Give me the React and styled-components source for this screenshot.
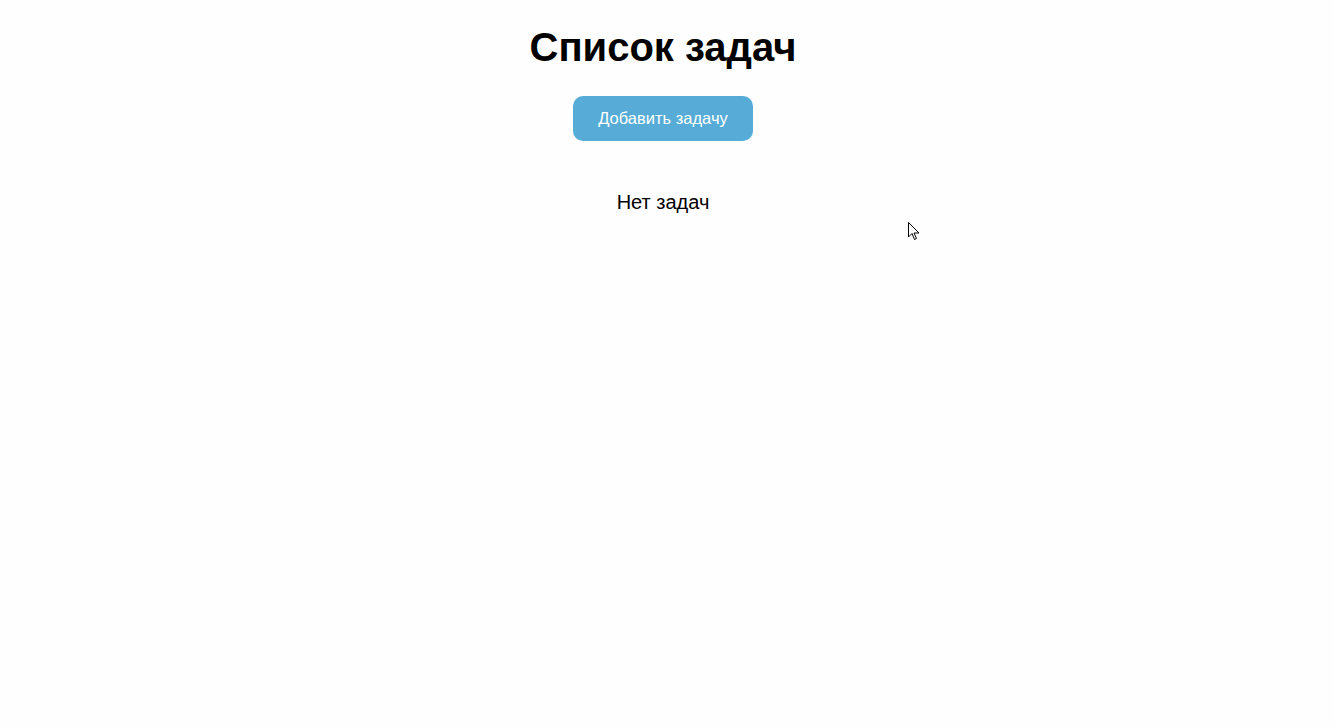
import React from 'react'
import styled, { createGlobalStyle } from 'styled-components'

const GlobalStyle = createGlobalStyle`
    html, body {
        margin: 0;
        padding: 0;
        background: #fefefe;
        font-family: "Liberation Sans", Arial, sans-serif;
    }
`;

const Page = styled.div`
    min-height: 726px;
    padding-right: 8px;
    display: flex;
    flex-direction: column;
    align-items: center;
    position: relative;
`;

const Title = styled.h1`
    margin: 23px 0 0;
    font-size: 40px;
    line-height: 48px;
    font-weight: bold;
    color: #000;
`;

const AddButton = styled.button`
    margin-top: 25px;
    width: 180px;
    height: 45px;
    border: none;
    border-radius: 10px;
    background: #56acd6;
    color: #fff;
    font-family: inherit;
    font-size: 16.5px;
    cursor: pointer;
`;

const Empty = styled.p`
    margin: 49px 0 0;
    font-size: 20px;
    line-height: 24px;
    color: #000;
`;

const Cursor = styled.svg`
    position: absolute;
    left: 908px;
    top: 222px;
`;

export default function App() {
    return (
        <Page>
            <GlobalStyle />
            <Title>Список задач</Title>
            <AddButton>Добавить задачу</AddButton>
            <Empty>Нет задач</Empty>
            <Cursor width="13" height="20" viewBox="0 0 13 20">
                <path d="M0.5 0.5 L0.5 15 L4 11.5 L6.5 17.5 L8.5 16.5 L6 11 L11 11 Z" fill="#fff" stroke="#000" strokeWidth="1" />
            </Cursor>
        </Page>
    )
}
